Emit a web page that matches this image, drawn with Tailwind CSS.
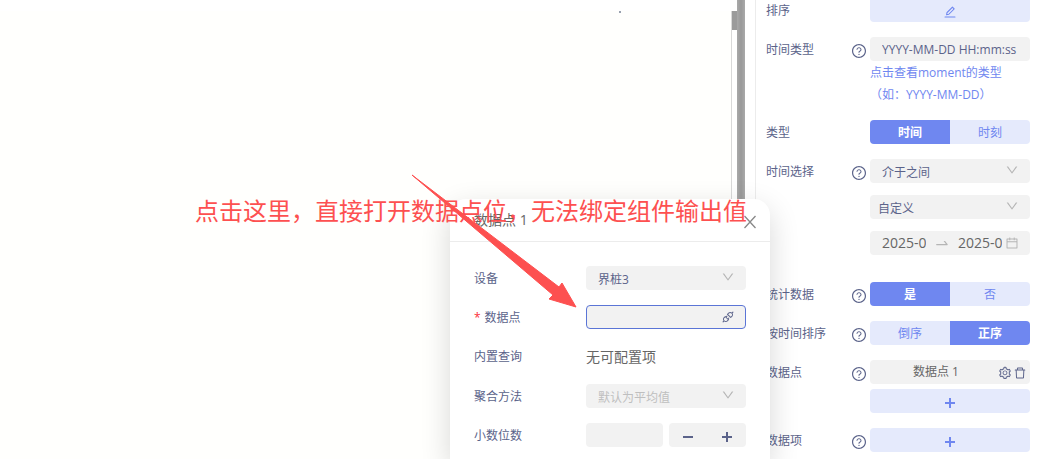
<!doctype html>
<html lang="zh-CN">
  <head>
    <meta charset="UTF-8" />
    <title>数据点</title>
    <meta name="viewport" content="width=device-width, initial-scale=1.0" />
    <script src="https://cdn.jsdelivr.net/npm/@tailwindcss/browser@4"></script>
  </head>
  <body
    class="relative flex h-screen overflow-hidden bg-white font-['Open_Sans','Noto_Sans_CJK_SC',sans-serif] text-xs text-[#5b638a]"
  >
    <svg class="hidden">
      <symbol id="help" viewBox="0 0 1024 1024">
        <path d="M512 64C264.6 64 64 264.6 64 512s200.6 448 448 448 448-200.6 448-448S759.4 64 512 64zm0 820c-205.4 0-372-166.6-372-372s166.6-372 372-372 372 166.6 372 372-166.6 372-372 372z" />
        <path d="M623.6 316.7C593.6 290.4 554 276 512 276s-81.6 14.5-111.6 40.7C369.2 344 352 380.7 352 420v7.6c0 4.4 3.6 8 8 8h48c4.4 0 8-3.6 8-8V420c0-44.1 43.1-80 96-80s96 35.9 96 80c0 31.1-22 59.6-56.1 72.7-21.2 8.1-39.2 22.3-52.1 40.9-13.1 19-19.9 41.8-19.9 64.9V620c0 4.4 3.6 8 8 8h48c4.4 0 8-3.6 8-8v-22.7a48.3 48.3 0 0130.9-44.8c59-22.7 97.1-74.7 97.1-132.5.1-39.3-17.1-76-48.3-103.3zM472 732a40 40 0 1080 0 40 40 0 10-80 0z" />
      </symbol>
      <symbol id="edit" viewBox="0 0 1024 1024">
        <path d="M257.7 752c2 0 4-.2 6-.5L431.9 722c2-.4 3.9-1.3 5.3-2.8l423.9-423.9a9.96 9.96 0 000-14.1L694.9 114.9c-1.9-1.9-4.4-2.9-7.1-2.9s-5.2 1-7.1 2.9L256.8 538.8c-1.5 1.5-2.4 3.3-2.8 5.3l-29.5 168.2a33.5 33.5 0 009.4 29.8c6.6 6.4 14.9 9.9 23.8 9.9zm67.4-174.4L687.8 215l73.3 73.3-362.7 362.6-88.9 15.7 15.6-89zM880 836H144c-17.7 0-32 14.3-32 32v36c0 4.4 3.6 8 8 8h784c4.4 0 8-3.6 8-8v-36c0-17.7-14.3-32-32-32z" />
      </symbol>
      <symbol id="down" viewBox="0 0 1024 1024">
        <path d="M884 256h-75c-5.1 0-9.9 2.5-12.9 6.6L512 654.2 227.9 262.6c-3-4.1-7.8-6.6-12.9-6.6h-75c-6.5 0-10.3 7.4-6.5 12.7l352.6 486.1c12.8 17.6 39 17.6 51.7 0l352.6-486.1c3.9-5.3.1-12.7-6.4-12.7z" />
      </symbol>
      <symbol id="swap" viewBox="0 0 1024 1024">
        <path d="M873.1 596.2l-164-208A32 32 0 00684 376h-64.8c-6.7 0-10.4 7.7-6.3 13l144.3 183H152c-4.4 0-8 3.6-8 8v60c0 4.4 3.6 8 8 8h695.9c26.8 0 41.7-30.8 25.2-51.8z" />
      </symbol>
      <symbol id="calendar" viewBox="0 0 1024 1024">
        <path d="M880 184H712v-64c0-4.4-3.6-8-8-8h-56c-4.4 0-8 3.6-8 8v64H384v-64c0-4.4-3.6-8-8-8h-56c-4.4 0-8 3.6-8 8v64H144c-17.7 0-32 14.3-32 32v664c0 17.7 14.3 32 32 32h736c17.7 0 32-14.3 32-32V216c0-17.7-14.3-32-32-32zm-40 656H184V460h656v380zM184 392V256h128v48c0 4.4 3.6 8 8 8h56c4.4 0 8-3.6 8-8v-48h256v48c0 4.4 3.6 8 8 8h56c4.4 0 8-3.6 8-8v-48h128v136H184z" />
      </symbol>
      <symbol id="setting" viewBox="0 0 1024 1024">
        <path fill-rule="evenodd" d="M924.8 625.7l-65.5-56c3.1-19 4.7-38.4 4.7-57.8s-1.6-38.8-4.7-57.8l65.5-56a32.03 32.03 0 009.3-35.2l-.9-2.6a443.74 443.74 0 00-79.7-137.9l-1.8-2.1a32.12 32.12 0 00-35.1-9.5l-81.3 28.9c-30-24.6-63.5-44-99.7-57.6l-15.7-85a32.05 32.05 0 00-25.8-25.7l-2.7-.5c-52.1-9.4-106.9-9.4-159 0l-2.7.5a32.05 32.05 0 00-25.8 25.7l-15.8 85.4a351.86 351.86 0 00-99 57.4l-81.9-29.1a32 32 0 00-35.1 9.5l-1.8 2.1a446.02 446.02 0 00-79.7 137.9l-.9 2.6c-4.5 12.5-.8 26.5 9.3 35.2l66.3 56.6c-3.1 18.8-4.6 38-4.6 57.1 0 19.2 1.5 38.4 4.6 57.1L99 625.5a32.03 32.03 0 00-9.3 35.2l.9 2.6c18.1 50.4 44.9 96.9 79.7 137.9l1.8 2.1a32.12 32.12 0 0035.1 9.5l81.9-29.1c29.8 24.5 63.1 43.9 99 57.4l15.8 85.4a32.05 32.05 0 0025.8 25.7l2.7.5a449.4 449.4 0 00159 0l2.7-.5a32.05 32.05 0 0025.8-25.7l15.7-85a350 350 0 0099.7-57.6l81.3 28.9a32 32 0 0035.1-9.5l1.8-2.1c34.8-41.1 61.6-87.5 79.7-137.9l.9-2.6c4.5-12.3.8-26.3-9.3-35zM788.3 465.9c2.5 15.1 3.8 30.6 3.8 46.1s-1.3 31-3.8 46.1l-6.6 40.1 74.7 63.9a370.03 370.03 0 01-42.6 73.6L721 702.8l-31.4 25.8c-23.9 19.6-50.5 35-79.3 45.8l-38.1 14.3-17.9 97a377.5 377.5 0 01-85 0l-17.9-97.2-37.8-14.5c-28.5-10.8-55-26.2-78.7-45.7l-31.4-25.9-93.4 33.2c-17-22.9-31.2-47.6-42.6-73.6l75.5-64.5-6.5-40c-2.4-14.9-3.7-30.3-3.7-45.5 0-15.3 1.2-30.6 3.7-45.5l6.5-40-75.5-64.5c11.3-26.1 25.6-50.7 42.6-73.6l93.4 33.2 31.4-25.9c23.7-19.5 50.2-34.9 78.7-45.7l37.9-14.3 17.9-97.2c28.1-3.2 56.8-3.2 85 0l17.9 97 38.1 14.3c28.7 10.8 55.4 26.2 79.3 45.8l31.4 25.8 92.8-32.9c17 22.9 31.2 47.6 42.6 73.6L781.8 426l6.5 39.9z" />
        <path d="M512 326c-97.2 0-176 78.8-176 176s78.8 176 176 176 176-78.8 176-176-78.8-176-176-176zm79.2 255.2A111.6 111.6 0 01512 614c-29.9 0-58-11.7-79.2-32.8A111.6 111.6 0 01400 502c0-29.9 11.7-58 32.8-79.2C454 401.6 482.1 390 512 390c29.9 0 58 11.6 79.2 32.8A111.6 111.6 0 01624 502c0 29.9-11.7 58-32.8 79.2z" />
      </symbol>
      <symbol id="delete" viewBox="0 0 1024 1024">
        <path d="M360 184h-8c4.4 0 8-3.6 8-8v8h304v-8c0 4.4 3.6 8 8 8h-8v72h72v-80c0-35.3-28.7-64-64-64H352c-35.3 0-64 28.7-64 64v80h72v-72zm504 72H160c-17.7 0-32 14.3-32 32v32c0 4.4 3.6 8 8 8h60.4l24.7 523c1.6 34.1 29.8 61 63.9 61h454c34.2 0 62.3-26.8 63.9-61l24.7-523H888c4.4 0 8-3.6 8-8v-32c0-17.7-14.3-32-32-32zM731.3 840H292.7l-24.2-512h487l-24.2 512z" />
      </symbol>
      <symbol id="api" viewBox="0 0 1024 1024">
        <path d="M917.7 148.8l-42.4-42.4c-1.6-1.6-3.6-2.3-5.7-2.3s-4.1.8-5.7 2.3l-76.1 76.1a199.27 199.27 0 00-112.1-34.3c-51.2 0-102.4 19.5-141.5 58.6L432.3 308.7a8.03 8.03 0 000 11.3L704 591.7c1.6 1.6 3.6 2.3 5.7 2.3 2 0 4.1-.8 5.7-2.3l101.9-101.9c68.9-69 77-175.7 24.3-253.5l76.1-76.1c3.1-3.2 3.1-8.3 0-11.3zM769.1 441.7l-59.4 59.4-186.8-186.8 59.4-59.4c24.9-24.9 58.1-38.7 93.4-38.7 35.3 0 68.4 13.7 93.4 38.7 24.9 24.9 38.7 58.1 38.7 93.4 0 35.3-13.8 68.4-38.7 93.4zm-190.2 105a8.03 8.03 0 00-11.3 0L501 613.3 410.7 523l66.7-66.7c3.1-3.1 3.1-8.2 0-11.3L441 408.6a8.03 8.03 0 00-11.3 0L363 475.3l-43-43a7.85 7.85 0 00-5.7-2.3c-2 0-4.1.8-5.7 2.3L206.8 534.2c-68.9 69-77 175.7-24.3 253.5l-76.1 76.1a8.03 8.03 0 000 11.3l42.4 42.4c1.6 1.6 3.6 2.3 5.7 2.3s4.1-.8 5.7-2.3l76.1-76.1c33.7 22.9 72.9 34.3 112.1 34.3 51.2 0 102.4-19.5 141.5-58.6l101.9-101.9c3.1-3.1 3.1-8.2 0-11.3l-43-43 66.7-66.7c3.1-3.1 3.1-8.2 0-11.3l-36.6-36.2zM441.7 769.1a131.32 131.32 0 01-93.4 38.7c-35.3 0-68.4-13.7-93.4-38.7a131.32 131.32 0 01-38.7-93.4c0-35.3 13.7-68.4 38.7-93.4l59.4-59.4 186.8 186.8-59.4 59.4z" />
      </symbol>
      <symbol id="plus" viewBox="0 0 10 10">
        <path d="M4 0h2v4h4v2H6v4H4V6H0V4h4z" />
      </symbol>
    </svg>

    <!-- canvas -->
    <main class="flex min-w-0 flex-1 flex-col pt-[11px]">
      <div class="flex flex-1 justify-end bg-[#fffffd]">
        <span class="mr-[110px] h-0.5 w-0.5 bg-gray-400"></span>
      </div>
    </main>
    <div class="mt-[11px] w-1.5 border-l border-[#d9d9d9]">
      <div class="h-[19px] bg-[#9b9b9b]"></div>
    </div>
    <div class="w-2 bg-linear-to-r from-[#a9a9a9] via-[#999999] to-[#a9a9a9]"></div>

    <!-- settings panel -->
    <aside class="ml-2.5 flex w-[300px] flex-col gap-[15px] border-l border-[#ececec] pr-[25px] pl-2.5">
      <div class="flex h-[22px]">
        <span class="flex-1 leading-[22px]">排序</span>
        <button
          type="button"
          aria-label="编辑排序"
          class="flex w-40 items-center justify-center rounded-b bg-[#e5eafc] pt-0.5 text-[#6f87f0]"
        >
          <svg class="size-3.5 fill-current"><use href="#edit" /></svg>
        </button>
      </div>

      <div class="flex">
        <label for="time-format" class="h-6 flex-1 leading-[26px]">时间类型</label>
        <svg class="mt-1.5 mr-[3px] size-4 fill-current"><use href="#help" /></svg>
        <div class="w-40">
          <input
            id="time-format"
            type="text"
            value="YYYY-MM-DD HH:mm:ss"
            class="block h-6 w-full rounded bg-[#f2f2f2] px-3"
          />
          <a href="#" class="block h-11 pt-px leading-[22px] text-[#6f87f0]">点击查看moment的类型（如：YYYY-MM-DD）</a>
        </div>
      </div>

      <div class="flex">
        <span class="h-6 flex-1 leading-[26px]">类型</span>
        <div class="flex h-6 w-40 overflow-hidden rounded">
          <button type="button" class="flex-1 bg-[#6f87f0] pt-0.5 font-bold text-white">时间</button>
          <button type="button" class="flex-1 bg-[#e5eafc] pt-0.5 text-[#6f87f0]">时刻</button>
        </div>
      </div>

      <div class="flex">
        <label for="time-range" class="h-6 flex-1 leading-[26px]">时间选择</label>
        <svg class="mt-1.5 mr-[3px] size-4 fill-current"><use href="#help" /></svg>
        <div class="flex w-40 flex-col gap-3 pb-3">
          <div class="relative">
            <select id="time-range" class="block h-6 w-full appearance-none rounded bg-[#f2f2f2] px-3 pt-1">
              <option>介于之间</option>
            </select>
            <svg class="pointer-events-none absolute top-1 right-[11px] size-3.5 fill-[#b5b5b5]"><use href="#down" /></svg>
          </div>
          <div class="relative">
            <select aria-label="时间范围" class="block h-6 w-full appearance-none rounded bg-[#f2f2f2] px-2 pt-1">
              <option>自定义</option>
            </select>
            <svg class="pointer-events-none absolute top-1 right-[11px] size-3.5 fill-[#b5b5b5]"><use href="#down" /></svg>
          </div>
          <div class="flex h-6 items-center rounded bg-[#f2f2f2] pr-[11px] pl-3 text-sm text-[#666666]">
            <input type="text" aria-label="开始日期" value="2025-0" class="w-11" />
            <svg class="mx-2 size-4 fill-[#b5b5b5]"><use href="#swap" /></svg>
            <input type="text" aria-label="结束日期" value="2025-0" class="w-11" />
            <svg class="ml-auto size-3.5 fill-[#b5b5b5]"><use href="#calendar" /></svg>
          </div>
        </div>
      </div>

      <div class="flex">
        <span class="h-6 flex-1 leading-[26px]">统计数据</span>
        <svg class="mt-1.5 mr-[3px] size-4 fill-current"><use href="#help" /></svg>
        <div class="flex h-6 w-40 overflow-hidden rounded">
          <button type="button" class="flex-1 bg-[#6f87f0] pt-0.5 font-bold text-white">是</button>
          <button type="button" class="flex-1 bg-[#e5eafc] pt-0.5 text-[#6f87f0]">否</button>
        </div>
      </div>

      <div class="flex">
        <span class="h-6 flex-1 leading-[26px]">按时间排序</span>
        <svg class="mt-1.5 mr-[3px] size-4 fill-current"><use href="#help" /></svg>
        <div class="flex h-6 w-40 overflow-hidden rounded">
          <button type="button" class="flex-1 bg-[#e5eafc] pt-0.5 text-[#6f87f0]">倒序</button>
          <button type="button" class="flex-1 bg-[#6f87f0] pt-0.5 font-bold text-white">正序</button>
        </div>
      </div>

      <div class="flex">
        <span class="h-6 flex-1 leading-[26px]">数据点</span>
        <svg class="mt-1.5 mr-[3px] size-4 fill-current"><use href="#help" /></svg>
        <div class="flex w-40 flex-col gap-[5px]">
          <div class="flex h-6 items-center rounded bg-[#f2f2f2] pr-[3px]">
            <span class="flex-1 pl-1 text-center leading-[26px] text-[#666666]">数据点 1</span>
            <button type="button" aria-label="设置" class="mr-px pt-0.5">
              <svg class="size-3.5 fill-current"><use href="#setting" /></svg>
            </button>
            <button type="button" aria-label="删除" class="pt-0.5">
              <svg class="size-3.5 fill-current"><use href="#delete" /></svg>
            </button>
          </div>
          <button
            type="button"
            aria-label="添加数据点"
            class="flex h-6 items-center justify-center rounded bg-[#e5eafc] pt-1 text-[#6f87f0]"
          >
            <svg class="size-2.5 fill-current"><use href="#plus" /></svg>
          </button>
        </div>
      </div>

      <div class="flex">
        <span class="h-6 flex-1 leading-[26px]">数据项</span>
        <svg class="mt-1.5 mr-[3px] size-4 fill-current"><use href="#help" /></svg>
        <button
          type="button"
          aria-label="添加数据项"
          class="flex h-6 w-40 items-center justify-center rounded bg-[#e5eafc] pt-1 text-[#6f87f0]"
        >
          <svg class="size-2.5 fill-current"><use href="#plus" /></svg>
        </button>
      </div>
    </aside>

    <!-- data point dialog -->
    <section
      role="dialog"
      aria-labelledby="dialog-title"
      class="absolute top-[199px] right-[285px] bottom-0 w-80 rounded-t-2xl bg-white shadow-[0_10px_30px_rgba(0,0,0,0.16)]"
    >
      <header class="flex h-[43px] items-center justify-between border-b border-[#ececec] pr-3 pl-6">
        <h2 id="dialog-title" class="text-sm text-[#666666]">数据点 1</h2>
        <button type="button" aria-label="关闭" class="pt-1">
          <svg class="size-4 stroke-[#888888]" viewBox="0 0 16 16">
            <path stroke-width="1.3" d="M2.5 2l11 12M13.5 2l-11 12" />
          </svg>
        </button>
      </header>
      <form class="flex flex-col gap-[15px] px-6 pt-6">
        <div class="flex">
          <label for="device" class="h-6 flex-1 leading-[26px]">设备</label>
          <div class="relative w-40">
            <select id="device" class="block h-6 w-full appearance-none rounded bg-[#f2f2f2] px-3 pt-1">
              <option>界桩3</option>
            </select>
            <svg class="pointer-events-none absolute top-1 right-[11px] size-3.5 fill-[#b5b5b5]"><use href="#down" /></svg>
          </div>
        </div>
        <div class="flex">
          <label for="point" class="h-6 flex-1 leading-[26px]">
            <span class="mr-1 text-red-500">*</span>数据点
          </label>
          <div class="flex h-6 w-40 items-center rounded border border-[#5b75d6] bg-[#f2f2f2] px-2.5">
            <input id="point" type="text" class="min-w-0 flex-1 outline-none" />
            <svg class="size-3.5 fill-current"><use href="#api" /></svg>
          </div>
        </div>
        <div class="flex h-[25px]">
          <span class="flex-1 leading-[26px]">内置查询</span>
          <span class="w-40 text-sm leading-[26px] text-[#666666]">无可配置项</span>
        </div>
        <div class="flex">
          <label for="aggregate" class="h-6 flex-1 leading-[26px]">聚合方法</label>
          <div class="relative w-40">
            <select id="aggregate" class="block h-6 w-full appearance-none rounded bg-[#f2f2f2] px-3 pt-1 text-[#bfbfbf]">
              <option>默认为平均值</option>
            </select>
            <svg class="pointer-events-none absolute top-1 right-[11px] size-3.5 fill-[#b5b5b5]"><use href="#down" /></svg>
          </div>
        </div>
        <div class="flex">
          <label for="digits" class="h-6 flex-1 leading-[26px]">小数位数</label>
          <div class="grid w-40 grid-cols-2 gap-1.5">
            <input id="digits" type="text" class="h-6 min-w-0 rounded bg-[#f2f2f2] px-3" />
            <div class="flex h-6 rounded bg-[#f2f2f2] pt-1">
              <button type="button" aria-label="减少" class="flex flex-1 items-center justify-center">
                <span class="h-0.5 w-2.5 bg-current"></span>
              </button>
              <button type="button" aria-label="增加" class="flex flex-1 items-center justify-center">
                <svg class="size-2.5 fill-current"><use href="#plus" /></svg>
              </button>
            </div>
          </div>
        </div>
      </form>
    </section>

    <!-- red annotation -->
    <p class="pointer-events-none absolute top-[195px] left-[195px] text-2xl whitespace-nowrap text-[#fd5050]">
      点击这里，直接打开数据点位，无法绑定组件输出值
    </p>
    <svg
      class="pointer-events-none absolute top-[174px] left-[411px] h-[134px] w-[166px] fill-[#fd5050]"
      viewBox="411 174 166 134"
    >
      <path d="M412 175L559 287L562 283L576 307L549 299L553 295z" stroke="#fd5050" stroke-width="1" />
    </svg>
  </body>
</html>
